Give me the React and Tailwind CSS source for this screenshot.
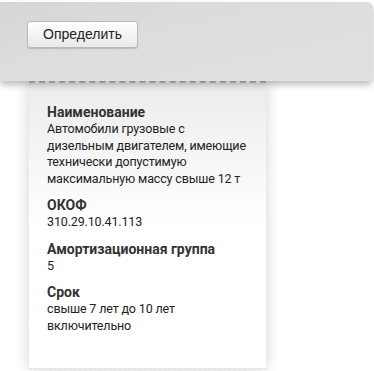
import React from 'react';

const ITEMS = [
  { label: 'Наименование', lines: ['Автомобили грузовые с', 'дизельным двигателем, имеющие', 'технически допустимую', 'максимальную массу свыше 12 т'] },
  { label: 'ОКОФ', lines: ['310.29.10.41.113'] },
  { label: 'Амортизационная группа', lines: ['5'] },
  { label: 'Срок', lines: ['свыше 7 лет до 10 лет', 'включительно'] },
];

export default function App() {
  return (
    <div className="w-[374px] h-[371px] bg-white overflow-hidden" style={{ fontFamily: 'Roboto, "Open Sans", sans-serif' }}>
      <div className="relative">
        {/* top panel */}
        <div className="relative z-10 mt-[2px] mr-[1px] h-[79px] rounded-r-[6px] bg-gradient-to-br from-[#d6d6d6] via-[#dedede] to-[#e0e0e0] shadow-[0_4px_6px_rgba(0,0,0,0.25)] pt-[19px] pl-[27px]">
          <button className="h-[27px] w-[111px] rounded-[3px] border border-[#b9b9b9] bg-gradient-to-b from-white to-[#e9e9e9] text-[14px] text-[#222] shadow-[0_1px_1px_rgba(0,0,0,0.15)]" style={{ fontFamily: '"Liberation Sans", Arial, sans-serif' }}>
            Определить
          </button>
        </div>

        {/* result card */}
        <div className="relative ml-[29px] w-[237px] h-[288px] bg-gradient-to-b from-[#ececec] via-white to-white shadow-[0_0_14px_rgba(0,0,0,0.18)] border-t-2 border-b border-dashed border-t-[#bdbdbd] border-b-[#e4e4e4] pl-[18px] pr-[10px] pt-[21px]">
          <div className="flex flex-col gap-[10px]">
            {ITEMS.map((it) => (
              <div key={it.label}>
                <div className="text-[14px] leading-[17px] font-bold text-[#333] whitespace-nowrap">{it.label}</div>
                {it.lines.map((l) => (
                  <div key={l} className="text-[12.5px] leading-[16.5px] tracking-[-0.15px] text-[#222] whitespace-nowrap">{l}</div>
                ))}
              </div>
            ))}
          </div>
        </div>
      </div>
    </div>
  );
}
